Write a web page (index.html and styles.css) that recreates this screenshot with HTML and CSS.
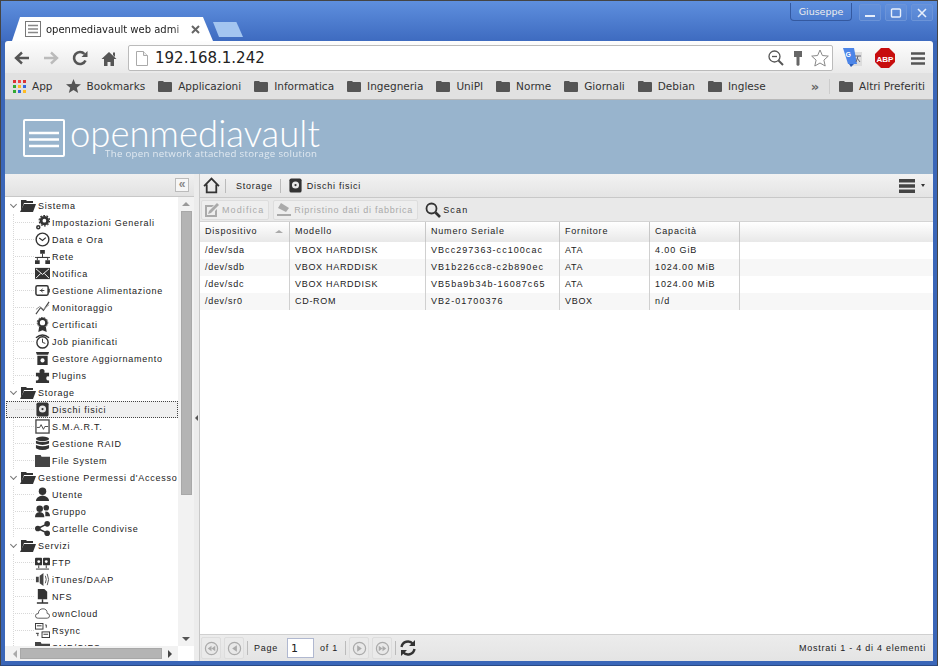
FILE: index.html
```html
<!DOCTYPE html>
<html lang="en">
<head>
<meta charset="UTF-8">
<title>openmediavault web administration</title>
<link rel="stylesheet" href="styles.css">
</head>
<body>

<!-- shared icons -->
<svg class="defs" width="0" height="0">
    <symbol id="i-folder" viewBox="0 0 14 12"><path d="M0 2q0-1 1-1h4l1 1h7q1 0 1 1v8q0 1-1 1H1q-1 0-1-1z" fill="#555"/></symbol>
    <symbol id="i-open" viewBox="0 0 16 13"><path d="M1 1h5l1 1h6v2H4L1 12z" fill="#333"/><path d="M4 5h12l-3 8H0z" fill="#333"/></symbol>
    <symbol id="i-gears" viewBox="0 0 16 16"><circle cx="10" cy="6" r="3.5" fill="none" stroke="#333" stroke-width="3"/><circle cx="10" cy="6" r="5.6" fill="none" stroke="#333" stroke-width="1.2" stroke-dasharray="2 1.5"/><circle cx="3.5" cy="13" r="1.6" fill="none" stroke="#333" stroke-width="1.6"/></symbol>
    <symbol id="i-clock" viewBox="0 0 16 16"><circle cx="8" cy="8" r="6.8" fill="none" stroke="#333" stroke-width="1.5"/><path d="M4.5 6.5 8 9l3.5-3" fill="none" stroke="#333" stroke-width="1.3"/></symbol>
    <symbol id="i-net" viewBox="0 0 16 16"><path d="M5.5 1h5v4h-5zM0 12h5v4H0zM11 12h5v4h-5z" fill="#333"/><path d="M8 5v4M2.5 12V9h11v3M0 9h16" stroke="#333" fill="none"/></symbol>
    <symbol id="i-mail" viewBox="0 0 16 14"><path d="M0 1h16v12H0z" fill="#333"/><path d="M1 2l7 6 7-6M1 12l5-5M15 12l-5-5" stroke="#fff" fill="none"/></symbol>
    <symbol id="i-power" viewBox="0 0 16 14"><rect x="1" y="2" width="13" height="10" rx="1.5" fill="none" stroke="#333" stroke-width="1.6"/><path d="M15 5v4" stroke="#333" stroke-width="1.6"/><path d="M5 7h5M8 5 6.500 7 8 9" stroke="#333" fill="none"/></symbol>
    <symbol id="i-chart" viewBox="0 0 16 16"><path d="M1 15 6 8l3 3 6-9" fill="none" stroke="#444" stroke-width="1.2"/><path d="M1 10l4-3 4 3 6-5" fill="none" stroke="#888"/></symbol>
    <symbol id="i-cert" viewBox="0 0 16 16"><circle cx="8" cy="6" r="4" fill="none" stroke="#333" stroke-width="2.4"/><circle cx="8" cy="6" r="5.6" fill="none" stroke="#333" stroke-dasharray="2 1"/><path d="M4.500 10 3.500 16 8 14l4.500 2-1-6z" fill="#333"/></symbol>
    <symbol id="i-job" viewBox="0 0 16 16"><circle cx="8" cy="9" r="6" fill="none" stroke="#333" stroke-width="1.5"/><path d="M1 4q7-6 14 0" fill="none" stroke="#333" stroke-width="1.5"/><path d="M8 5v4l3 1" fill="none" stroke="#333"/></symbol>
    <symbol id="i-update" viewBox="0 0 16 16"><path d="M1 1h14l-1 3H2zM2.500 5h11v10h-11z" fill="#333"/><circle cx="8" cy="10" r="2.200" fill="#fff"/></symbol>
    <symbol id="i-plugin" viewBox="0 0 16 16"><path d="M1 5h4q-1-4 2.500-4T10 5h5v4q-3-1-3 2t3 2v3H1v-3q3 1 3-2T1 9z" fill="#333"/></symbol>
    <symbol id="i-disk" viewBox="0 0 16 16"><rect x="1.500" y="0.500" width="13" height="15" rx="2" fill="#333"/><circle cx="8" cy="7.500" r="3.800" fill="#e8e8e8"/><circle cx="8" cy="7.500" r="1.200" fill="#333"/></symbol>
    <symbol id="i-smart" viewBox="0 0 16 16"><rect x="1" y="1" width="14" height="14" fill="#fff" stroke="#444" stroke-width="1.400"/><path d="M2 9h3l1.500-3L9 11l1.500-3H14" fill="none" stroke="#444"/></symbol>
    <symbol id="i-raid" viewBox="0 0 16 16"><ellipse cx="8" cy="3" rx="7" ry="2.500" fill="#333"/><path d="M1 5q7 3 14 0v3q-7 3-14 0zM1 9.500q7 3 14 0V13q-7 4-14 0z" fill="#333"/></symbol>
    <symbol id="i-fs" viewBox="0 0 16 16"><path d="M0 2h6l1 2h9v11H0z" fill="#444"/></symbol>
    <symbol id="i-user" viewBox="0 0 16 16"><circle cx="8" cy="4.500" r="4" fill="#333"/><path d="M1 15q0-5 7-6 7 1 7 6z" fill="#333"/></symbol>
    <symbol id="i-group" viewBox="0 0 16 16"><circle cx="5" cy="5" r="3.500" fill="#333"/><circle cx="12" cy="4" r="3" fill="#333"/><path d="M0 14q0-5 5-5.500 5 .5 5 5.500zM11 8q5 0 5 5h-5z" fill="#333"/></symbol>
    <symbol id="i-share" viewBox="0 0 16 16"><circle cx="3" cy="8" r="3" fill="#333"/><circle cx="13" cy="3" r="3" fill="#333"/><circle cx="13" cy="13" r="3" fill="#333"/><path d="M3 8l10-5M3 8l10 5" stroke="#333" stroke-width="1.500"/></symbol>
    <symbol id="i-ftp" viewBox="0 0 16 16"><rect x="0" y="3" width="7.500" height="8" rx="1" fill="#333"/><rect x="8.500" y="3" width="7.500" height="8" rx="1" fill="#333"/><circle cx="4" cy="7" r="1.500" fill="#fff"/><circle cx="12" cy="7" r="1.500" fill="#fff"/><path d="M4 11v3M12 11v3M1 15h14" stroke="#333"/></symbol>
    <symbol id="i-audio" viewBox="0 0 16 16"><path d="M1 5h3v6H1zM5 4l4-3v14l-4-3z" fill="#444"/><path d="M11 4q2 4 0 8M13 2q3 6 0 12" fill="none" stroke="#555"/></symbol>
    <symbol id="i-nfs" viewBox="0 0 16 16"><path d="M3 0h7l3 3v8H3z" fill="#333"/><path d="M8 11v3M2 15h12" stroke="#333" stroke-width="1.500"/></symbol>
    <symbol id="i-cloud" viewBox="0 0 16 12"><path d="M4 11H3Q.5 11 .5 8.500T3.500 6Q4 1 8.500 1T13 6q2.500 0 2.500 2.500T13 11z" fill="#fff" stroke="#555"/></symbol>
    <symbol id="i-rsync" viewBox="0 0 16 16"><rect x="0.500" y="0.500" width="8" height="6" fill="#fff" stroke="#333"/><rect x="7.500" y="9.500" width="8" height="6" fill="#fff" stroke="#333"/><path d="M2 3h5M9 12h5M11 2h1M12 2v3M1 11h3M3 11v3" stroke="#333"/></symbol>
    <symbol id="i-home" viewBox="0 0 16 16"><path d="M1 8.500 8 1.500l7 7M3.500 7v7.500h9V7" fill="none" stroke="#333" stroke-width="1.700"/></symbol>
    <symbol id="i-circle-left" viewBox="0 0 16 16"><circle cx="8" cy="8" r="6.500" fill="#e8e8e8" stroke="#aaa" stroke-width="1.300"/><path d="M10.500 4.500v7L5.500 8z" fill="#aaa"/></symbol>
    <symbol id="i-circle-first" viewBox="0 0 16 16"><circle cx="8" cy="8" r="6.500" fill="#e8e8e8" stroke="#aaa" stroke-width="1.300"/><path d="M8 5v6L4 8zM12 5v6L8 8z" fill="#aaa"/></symbol>
    <symbol id="i-circle-right" viewBox="0 0 16 16"><circle cx="8" cy="8" r="6.500" fill="#e8e8e8" stroke="#aaa" stroke-width="1.300"/><path d="M5.500 4.500v7l5-3.500z" fill="#aaa"/></symbol>
    <symbol id="i-circle-last" viewBox="0 0 16 16"><circle cx="8" cy="8" r="6.500" fill="#e8e8e8" stroke="#aaa" stroke-width="1.300"/><path d="M4 5v6l4-3zM8 5v6l4-3z" fill="#aaa"/></symbol>
</svg>

<div class="window">

    <div class="titlebar">
        <div class="tab">
            <svg class="tab-icon" width="16" height="16" viewBox="0 0 16 16"><rect x="0.500" y="0.500" width="15" height="15" fill="#fff" stroke="#777"/><path d="M3 4.500h10M3 8h10M3 11.500h10" stroke="#888" stroke-width="1.500"/></svg>
            <span class="tab-title">openmediavault web admi</span>
            <svg class="tab-close" width="9" height="9" viewBox="0 0 9 9"><path d="M1 1l7 7M8 1 1 8" stroke="#666" stroke-width="2"/></svg>
        </div>
        <div class="new-tab"></div>
        <div class="profile">Giuseppe</div>
        <div class="win-btn"><svg width="12" height="12" viewBox="0 0 12 12"><path d="M1 9h10" stroke="#e6eefb" stroke-width="2"/></svg></div>
        <div class="win-btn"><svg width="12" height="12" viewBox="0 0 12 12"><rect x="1.500" y="2" width="9" height="8" rx="1" fill="none" stroke="#e6eefb" stroke-width="1.400"/></svg></div>
        <div class="win-btn"><svg width="12" height="12" viewBox="0 0 12 12"><path d="M2 2l8 8M10 2l-8 8" stroke="#e6eefb" stroke-width="1.600"/></svg></div>
    </div>

    <div class="toolbar">
        <svg class="nav-icon" width="16" height="14" viewBox="0 0 16 14"><path d="M15 7H3M8 1.500 2 7l6 5.500" fill="none" stroke="#555" stroke-width="2.400"/></svg>
        <svg class="nav-icon" width="16" height="14" viewBox="0 0 16 14"><path d="M1 7h12M8 1.500 14 7l-6 5.500" fill="none" stroke="#bbb" stroke-width="2.400"/></svg>
        <svg class="nav-icon" width="16" height="16" viewBox="0 0 16 16"><path d="M13.500 10.500A6 6 0 1 1 12.500 4" fill="none" stroke="#555" stroke-width="2.600"/><path d="M15.500 1v6h-6z" fill="#555"/></svg>
        <svg class="nav-icon" width="16" height="15" viewBox="0 0 16 15"><path d="M8 1 .5 8H3v7h3.500v-4h3v4H13V8h2.500zM12 1.500h2V6l-2-2z" fill="#555"/></svg>
        <div class="omnibox">
            <svg class="page-icon" width="12" height="15" viewBox="0 0 12 15"><path d="M.5.500h7l4 4v10H.5z" fill="#fff" stroke="#aaa"/><path d="M7.500.500v4h4" fill="#eee" stroke="#aaa"/></svg>
            <span class="url">192.168.1.242</span>
            <svg class="omni-zoom" width="16" height="16" viewBox="0 0 16 16"><circle cx="6.500" cy="6.500" r="5.500" fill="#fff" stroke="#555" stroke-width="1.300"/><path d="M4 6.500h5" stroke="#555" stroke-width="1.300"/><path d="M10.500 10.500 15 15" stroke="#555" stroke-width="2"/></svg>
            <svg class="omni-key" width="10" height="15" viewBox="0 0 10 15"><path d="M1 0h8v6H6.500v8l-1.500 1-1.500-1V6H1z" fill="#666"/></svg>
            <svg class="omni-star" width="18" height="18" viewBox="0 0 18 18"><path d="M9 1l2.400 5.500 5.900.6-4.400 4 1.300 5.900L9 14l-5.200 3 1.300-5.900-4.400-4 5.900-.6z" fill="#fff" stroke="#888"/></svg>
        </div>
        <svg class="translate-icon" width="19" height="20" viewBox="0 0 19 20"><rect x="9" y="4" width="10" height="14" fill="#ddd"/><path d="M0 0h11l3 16H7l-1 0 -1 0z" fill="#4c85e8"/><path d="M6 16h5l-3 3z" fill="#2a5cb8"/><text class="translate-g" x="2.500" y="9">G</text><path d="M12 8h6M15 8l-2 6M14 10l3 4" stroke="#667" fill="none"/></svg>
        <svg class="abp-icon" width="20" height="20" viewBox="0 0 20 20"><path d="M6 0h8l6 6v8l-6 6H6l-6-6V6z" fill="#c70d0d"/><text class="abp-text" x="10" y="13.500">ABP</text></svg>
        <svg class="menu-icon" width="14" height="13" viewBox="0 0 14 13"><path d="M0 1.500h14M0 6.500h14M0 11.500h14" stroke="#555" stroke-width="2.600"/></svg>
    </div>

    <div class="bookmarks">
        <span class="bm bm-app"><svg width="13" height="13" viewBox="0 0 13 13"><path d="M0 0h3v3H0z" fill="#d33"/><path d="M5 0h3v3H5z" fill="#e44"/><path d="M10 0h3v3h-3z" fill="#d33"/><path d="M0 5h3v3H0z" fill="#3a3"/><path d="M5 5h3v3H5z" fill="#fb2"/><path d="M10 5h3v3h-3z" fill="#36d"/><path d="M0 10h3v3H0z" fill="#3a3"/><path d="M5 10h3v3H5z" fill="#36d"/><path d="M10 10h3v3h-3z" fill="#fb2"/></svg>App</span>
        <span class="bm bm-star"><svg width="15" height="14" viewBox="0 0 15 14"><path d="M7.500 0l2 5 5.500.3-4.200 3.400 1.400 5.300-4.700-3-4.700 3 1.400-5.300L0 5.300 5.500 5z" fill="#555"/></svg>Bookmarks</span>
        <span class="bm"><svg class="bm-folder"><use href="#i-folder"/></svg>Applicazioni</span>
        <span class="bm"><svg class="bm-folder"><use href="#i-folder"/></svg>Informatica</span>
        <span class="bm"><svg class="bm-folder"><use href="#i-folder"/></svg>Ingegneria</span>
        <span class="bm"><svg class="bm-folder"><use href="#i-folder"/></svg>UniPI</span>
        <span class="bm"><svg class="bm-folder"><use href="#i-folder"/></svg>Norme</span>
        <span class="bm"><svg class="bm-folder"><use href="#i-folder"/></svg>Giornali</span>
        <span class="bm"><svg class="bm-folder"><use href="#i-folder"/></svg>Debian</span>
        <span class="bm"><svg class="bm-folder"><use href="#i-folder"/></svg>Inglese</span>
        <span class="bm-more">»</span>
        <span class="bm bm-other"><svg class="bm-folder"><use href="#i-folder"/></svg>Altri Preferiti</span>
    </div>

    <div class="page">
        <div class="brand">
            <svg class="brand-icon" width="42" height="38" viewBox="0 0 42 38"><rect x="1" y="1" width="40" height="36" rx="1" fill="none" stroke="#fff" stroke-width="2"/><path d="M6 14h30M6 20.500h30M6 27h30" stroke="#fff" stroke-width="2.600"/></svg>
            <div class="brand-text">
                <div class="brand-name">openmediavault</div>
                <div class="brand-tag">The open network attached storage solution</div>
            </div>
        </div>

        <div class="panels">
            <div class="sidebar">
                <div class="panel-head">
                    <span class="collapse">«</span>
                </div>
                <div class="sidebar-body">
                    <div class="tree">
                        <div class="group-row"><span class="chev"></span><svg class="folder"><use href="#i-open"/></svg>Sistema</div>
                        <div class="group">
                            <div class="leaf"><svg class="ico"><use href="#i-gears"/></svg>Impostazioni Generali</div>
                            <div class="leaf"><svg class="ico"><use href="#i-clock"/></svg>Data e Ora</div>
                            <div class="leaf"><svg class="ico"><use href="#i-net"/></svg>Rete</div>
                            <div class="leaf"><svg class="ico"><use href="#i-mail"/></svg>Notifica</div>
                            <div class="leaf"><svg class="ico"><use href="#i-power"/></svg>Gestione Alimentazione</div>
                            <div class="leaf"><svg class="ico"><use href="#i-chart"/></svg>Monitoraggio</div>
                            <div class="leaf"><svg class="ico"><use href="#i-cert"/></svg>Certificati</div>
                            <div class="leaf"><svg class="ico"><use href="#i-job"/></svg>Job pianificati</div>
                            <div class="leaf"><svg class="ico"><use href="#i-update"/></svg>Gestore Aggiornamento</div>
                            <div class="leaf"><svg class="ico"><use href="#i-plugin"/></svg>Plugins</div>
                        </div>
                        <div class="group-row"><span class="chev"></span><svg class="folder"><use href="#i-open"/></svg>Storage</div>
                        <div class="group">
                            <div class="leaf selected"><svg class="ico"><use href="#i-disk"/></svg>Dischi fisici</div>
                            <div class="leaf"><svg class="ico"><use href="#i-smart"/></svg>S.M.A.R.T.</div>
                            <div class="leaf"><svg class="ico"><use href="#i-raid"/></svg>Gestione RAID</div>
                            <div class="leaf"><svg class="ico"><use href="#i-fs"/></svg>File System</div>
                        </div>
                        <div class="group-row"><span class="chev"></span><svg class="folder"><use href="#i-open"/></svg>Gestione Permessi d'Accesso</div>
                        <div class="group">
                            <div class="leaf"><svg class="ico"><use href="#i-user"/></svg>Utente</div>
                            <div class="leaf"><svg class="ico"><use href="#i-group"/></svg>Gruppo</div>
                            <div class="leaf"><svg class="ico"><use href="#i-share"/></svg>Cartelle Condivise</div>
                        </div>
                        <div class="group-row"><span class="chev"></span><svg class="folder"><use href="#i-open"/></svg>Servizi</div>
                        <div class="group">
                            <div class="leaf"><svg class="ico"><use href="#i-ftp"/></svg>FTP</div>
                            <div class="leaf"><svg class="ico"><use href="#i-audio"/></svg>iTunes/DAAP</div>
                            <div class="leaf"><svg class="ico"><use href="#i-nfs"/></svg>NFS</div>
                            <div class="leaf"><svg class="ico"><use href="#i-cloud"/></svg>ownCloud</div>
                            <div class="leaf"><svg class="ico"><use href="#i-rsync"/></svg>Rsync</div>
                            <div class="leaf"><svg class="ico"><use href="#i-fs"/></svg>SMB/CIFS</div>
                        </div>
                    </div>
                    <div class="vscroll">
                        <span class="arrow-up"></span>
                        <div class="vthumb"></div>
                        <span class="arrow-down"></span>
                    </div>
                </div>
                <div class="hscroll">
                    <span class="arrow-left"></span>
                    <div class="hthumb"></div>
                    <span class="arrow-right"></span>
                    <div class="hcorner"></div>
                </div>
            </div>

            <div class="splitter"><span class="split-handle"></span></div>

            <div class="main">
                <div class="crumbs">
                    <svg class="crumb-home"><use href="#i-home"/></svg>
                    <span class="sep"></span>
                    <span class="crumb">Storage</span>
                    <span class="sep"></span>
                    <svg class="ico crumb-disk"><use href="#i-disk"/></svg>
                    <span class="crumb">Dischi fisici</span>
                    <svg class="crumb-menu" width="16" height="14" viewBox="0 0 16 14"><path d="M0 0h16v3.500H0zM0 5.200h16v3.500H0zM0 10.500h16V14H0z" fill="#444"/></svg>
                    <span class="caret"></span>
                </div>
                <div class="actions">
                    <span class="action disabled action-edit"><svg class="action-icon" width="16" height="16" viewBox="0 0 16 16"><path d="M1 3h9L8 5H3v8h8V9l2-2v8H1z" fill="#aaa"/><path d="M5 9l8-8 2 2-8 8-3 1z" fill="#aaa"/></svg>Modifica</span>
                    <span class="action disabled"><svg class="action-icon" width="16" height="16" viewBox="0 0 16 16"><path d="M5 1l8 5-3 4-8-4z" fill="#aaa"/><path d="M1 12h14v2H1z" fill="#aaa"/></svg>Ripristino dati di fabbrica</span>
                    <span class="action action-scan"><svg class="action-icon" width="16" height="16" viewBox="0 0 16 16"><circle cx="6.500" cy="6.500" r="5" fill="none" stroke="#333" stroke-width="1.800"/><path d="M10.500 10.500 15 15" stroke="#333" stroke-width="2.600"/></svg>Scan</span>
                </div>

                <div class="grid">
                    <div class="grid-row grid-head">
                        <div class="cell c-dev">Dispositivo<span class="sort"></span></div>
                        <div class="cell c-model">Modello</div>
                        <div class="cell c-serial">Numero Seriale</div>
                        <div class="cell c-vendor">Fornitore</div>
                        <div class="cell c-size">Capacità</div>
                        <div class="cell c-rest"></div>
                    </div>
                    <div class="grid-row">
                        <div class="cell c-dev">/dev/sda</div>
                        <div class="cell c-model">VBOX HARDDISK</div>
                        <div class="cell c-serial">VBcc297363-cc100cac</div>
                        <div class="cell c-vendor">ATA</div>
                        <div class="cell c-size">4.00 GiB</div>
                    </div>
                    <div class="grid-row alt">
                        <div class="cell c-dev">/dev/sdb</div>
                        <div class="cell c-model">VBOX HARDDISK</div>
                        <div class="cell c-serial">VB1b226cc8-c2b890ec</div>
                        <div class="cell c-vendor">ATA</div>
                        <div class="cell c-size">1024.00 MiB</div>
                    </div>
                    <div class="grid-row">
                        <div class="cell c-dev">/dev/sdc</div>
                        <div class="cell c-model">VBOX HARDDISK</div>
                        <div class="cell c-serial">VB5ba9b34b-16087c65</div>
                        <div class="cell c-vendor">ATA</div>
                        <div class="cell c-size">1024.00 MiB</div>
                    </div>
                    <div class="grid-row alt">
                        <div class="cell c-dev">/dev/sr0</div>
                        <div class="cell c-model">CD-ROM</div>
                        <div class="cell c-serial">VB2-01700376</div>
                        <div class="cell c-vendor">VBOX</div>
                        <div class="cell c-size">n/d</div>
                    </div>
                </div>

                <div class="pager">
                    <span class="pg-btn"><svg class="pg-icon"><use href="#i-circle-first"/></svg></span>
                    <span class="pg-btn"><svg class="pg-icon"><use href="#i-circle-left"/></svg></span>
                    <span class="sep"></span>
                    <span class="pg-label">Page</span>
                    <input class="pg-input" type="text" value="1">
                    <span class="pg-label">of 1</span>
                    <span class="sep"></span>
                    <span class="pg-btn"><svg class="pg-icon"><use href="#i-circle-right"/></svg></span>
                    <span class="pg-btn"><svg class="pg-icon"><use href="#i-circle-last"/></svg></span>
                    <span class="sep"></span>
                    <svg class="pg-refresh" width="16" height="16" viewBox="0 0 16 16"><path d="M1.500 7A6.500 6.500 0 0 1 13 4M14.500 9A6.500 6.500 0 0 1 3 12" fill="none" stroke="#333" stroke-width="2.400"/><path d="M15 0v6H9zM1 16v-6h6z" fill="#333"/></svg>
                    <span class="pg-info">Mostrati 1 - 4 di 4 elementi</span>
                </div>
            </div>
        </div>
    </div>
</div>

</body>
</html>
```

FILE: styles.css
```css
/* browser window */
html, body {
    margin: 0;
    padding: 0;
    height: 100%;
    overflow: hidden;
    background: #3a66b8;
}
.defs {
    position: absolute;
}
.window {
    width: 938px;
    height: 666px;
    box-sizing: border-box;
    display: flex;
    flex-direction: column;
    border: 1px solid #444;
    border-bottom-color: #2a4a86;
    font-family: "DejaVu Sans", sans-serif;
}

/* title bar and tabs */
.titlebar {
    height: 40px;
    flex: none;
    display: flex;
    align-items: flex-start;
    padding: 0 4px;
    background: linear-gradient(#5e8fde, #3e6bc0);
}
.tab {
    width: 201px;
    height: 24px;
    margin: 16px 0 0 7px;
    box-sizing: border-box;
    display: flex;
    align-items: center;
    padding: 0 13px 0 13px;
    background: #fff;
    clip-path: polygon(0 100%, 4% 0, 95% 0, 100% 100%);
    font-size: 10px;
    color: #222;
}
.tab-icon {
    flex: none;
    margin-right: 5px;
}
.tab-title {
    flex: 1;
    white-space: nowrap;
    -webkit-mask-image: linear-gradient(to right, #000 88%, transparent 100%);
    mask-image: linear-gradient(to right, #000 88%, transparent 100%);
}
.tab-close {
    flex: none;
}
.new-tab {
    width: 30px;
    height: 15px;
    margin-top: 21px;
    background: #a3c5f0;
    clip-path: polygon(0 0, 78% 0, 100% 100%, 20% 100%);
}
.profile {
    margin: 2px 3px 0 auto;
    width: 60px;
    height: 17px;
    line-height: 17px;
    text-align: center;
    font-size: 9.5px;
    color: #eee;
    border: 1px solid #3459a0;
    border-top: none;
    border-radius: 0 0 4px 4px;
}
.win-btn {
    width: 20px;
    height: 15px;
    margin: 3px 0 0 4px;
    display: flex;
    align-items: center;
    justify-content: center;
    border: 1px solid #6c94d8;
    border-radius: 2px;
    background: rgba(255, 255, 255, 0.05);
}

/* address bar */
.toolbar {
    height: 32px;
    flex: none;
    box-sizing: border-box;
    margin: 0 4px;
    display: flex;
    align-items: center;
    padding: 2px 0 0 9px;
    background: linear-gradient(#fdfdfd, #e9e9e9);
    border-radius: 3px 3px 0 0;
}
.nav-icon {
    flex: none;
    margin-right: 13px;
}
.omnibox {
    width: 705px;
    height: 26px;
    box-sizing: border-box;
    margin-left: -2px;
    display: flex;
    align-items: center;
    padding: 0 3px 0 7px;
    background: #fff;
    border: 1px solid #bbb;
    border-radius: 2px;
}
.page-icon {
    margin-right: 7px;
}
.url {
    font-size: 15px;
    color: #222;
    flex: 1;
}
.omni-zoom {
    margin-right: 9px;
}
.omni-key {
    margin-right: 8px;
}
.translate-icon {
    margin-left: 10px;
}
.translate-g {
    font: bold 7px "Liberation Sans", sans-serif;
    fill: #fff;
}
.abp-icon {
    margin-left: 13px;
}
.abp-text {
    font: bold 8px "Liberation Sans", sans-serif;
    fill: #fff;
    text-anchor: middle;
}
.menu-icon {
    margin-left: 16px;
}

/* bookmarks */
.bookmarks {
    height: 27px;
    flex: none;
    margin: 0 4px;
    box-sizing: border-box;
    display: flex;
    align-items: center;
    padding: 0 0 0 8px;
    background: #e1e1e1;
    border-bottom: 1px solid #b8b8b8;
    font-size: 10.5px;
    color: #333;
}
.bm {
    display: flex;
    align-items: center;
    gap: 6px;
    margin-right: 13px;
    white-space: nowrap;
}
.bm-folder {
    width: 14px;
    height: 12px;
}
.bm-more {
    margin-left: auto;
    padding: 0 10px 0 4px;
    font-weight: bold;
    font-size: 13px;
    color: #666;
    border-right: 1px solid #ccc;
}
.bm-other {
    margin: 0 8px 0 9px;
}

/* page */
.page {
    flex: 1;
    min-height: 0;
    margin: 0 4px 4px;
    display: flex;
    flex-direction: column;
    background: #98b4cd;
    font-family: "Liberation Sans", sans-serif;
    font-size: 9px;
    letter-spacing: 0.75px;
    color: #222;
}
.brand {
    height: 74px;
    flex: none;
    display: flex;
    align-items: flex-start;
    padding: 18px 0 0 18px;
    box-sizing: border-box;
}
.brand-icon {
    margin-top: 1px;
}
.brand-text {
    margin-left: 5px;
    color: #fff;
}
.brand-name {
    font-family: Lato, sans-serif;
    font-weight: 300;
    font-size: 36.5px;
    line-height: 30px;
    letter-spacing: 0;
}
.brand-tag {
    font-family: "Open Sans", sans-serif;
    font-size: 9.7px;
    letter-spacing: 0.3px;
    line-height: 11px;
    margin-left: 35px;
    opacity: 0.7;
    white-space: nowrap;
}
.panels {
    flex: 1;
    min-height: 0;
    display: flex;
}

/* left tree panel */
.sidebar {
    width: 189px;
    flex: none;
    display: flex;
    flex-direction: column;
    background: #fff;
}
.panel-head {
    height: 23px;
    flex: none;
    box-sizing: border-box;
    display: flex;
    align-items: center;
    justify-content: flex-end;
    padding-right: 5px;
    background: linear-gradient(#f0f0f0, #e2e2e2);
    border-bottom: 1px solid #c8c8c8;
}
.collapse {
    width: 12px;
    height: 12px;
    line-height: 10px;
    text-align: center;
    font-size: 12px;
    font-weight: bold;
    letter-spacing: 0;
    color: #888;
    background: #f6f6f6;
    border: 1px solid #bbb;
}
.sidebar-body {
    flex: 1;
    min-height: 0;
    display: flex;
}
.tree {
    flex: 1;
    min-width: 0;
    overflow: hidden;
}
.group-row,
.leaf {
    height: 17px;
    display: flex;
    align-items: center;
    white-space: nowrap;
    box-sizing: border-box;
}
.chev {
    width: 5px;
    height: 5px;
    flex: none;
    margin: -3px 4px 0 6px;
    box-sizing: border-box;
    border: solid #777;
    border-width: 0 1px 1px 0;
    transform: rotate(45deg);
}
.folder {
    width: 16px;
    height: 13px;
    flex: none;
    margin: 0 2px 0 0;
}
.group {
    margin-left: 8px;
    border-left: 1px dotted #d8d8d8;
}
.leaf {
    padding-left: 21px;
    position: relative;
}
.leaf::before {
    content: "";
    position: absolute;
    left: 1px;
    top: 8px;
    width: 19px;
    border-top: 1px dotted #d8d8d8;
}
.ico {
    width: 15px;
    height: 15px;
    margin-right: 2px;
    flex: none;
    position: relative;
}
.selected {
    background: #f0f0f0;
    outline: 1px dotted #444;
    outline-offset: -1px;
    margin-left: -8px;
    padding-left: 29px;
}
.selected::before {
    left: 9px;
}
.vscroll {
    width: 16px;
    flex: none;
    display: flex;
    flex-direction: column;
    align-items: center;
    background: #f2f2f2;
}
.arrow-up,
.arrow-down {
    width: 0;
    height: 0;
    margin: 5px 0;
    border: 4px solid transparent;
    border-top: none;
    border-bottom: 4px solid #999;
}
.arrow-down {
    margin-top: auto;
    border-bottom: none;
    border-top: 4px solid #555;
}
.vthumb {
    width: 11px;
    height: 284px;
    background: #b4b4b4;
    border: 1px solid #a8a8a8;
    box-sizing: border-box;
}
.hscroll {
    height: 15px;
    flex: none;
    display: flex;
    align-items: center;
    background: #f2f2f2;
}
.arrow-left,
.arrow-right {
    width: 0;
    height: 0;
    margin: 0 3px 0 8px;
    border: 4px solid transparent;
    border-left: none;
    border-right: 4px solid #aaa;
}
.arrow-right {
    margin: 0 6px 0 6px;
    border-right: none;
    border-left: 4px solid #444;
}
.hthumb {
    width: 142px;
    height: 11px;
    background: #b4b4b4;
    border: 1px solid #a8a8a8;
    box-sizing: border-box;
}
.hcorner {
    flex: 1;
    height: 100%;
    background: #fff;
}
.splitter {
    width: 5px;
    flex: none;
    display: flex;
    align-items: center;
    justify-content: center;
    background: #ececec;
}
.split-handle {
    width: 0;
    height: 0;
    border: 3px solid transparent;
    border-left: none;
    border-right: 3px solid #555;
}

/* right panel */
.main {
    flex: 1;
    min-width: 0;
    display: flex;
    flex-direction: column;
    background: #fff;
    border-left: 1px solid #c8c8c8;
}
.crumbs {
    height: 24px;
    flex: none;
    box-sizing: border-box;
    display: flex;
    align-items: center;
    padding: 0 8px 0 3px;
    background: linear-gradient(#f2f2f2, #e4e4e4);
    border-bottom: 1px solid #c8c8c8;
}
.crumb-home {
    width: 17px;
    height: 17px;
}
.sep {
    width: 1px;
    height: 14px;
    margin: 0 10px 0 5px;
    background: #bbb;
    flex: none;
}
.crumb + .sep {
    margin: 0 7px;
}
.crumb-disk {
    margin-right: 4px;
}
.crumb-menu {
    margin-left: auto;
}
.caret {
    width: 0;
    height: 0;
    margin-left: 6px;
    border: 2.500px solid transparent;
    border-top: 3px solid #333;
    border-bottom: none;
}
.actions {
    height: 24px;
    flex: none;
    box-sizing: border-box;
    display: flex;
    align-items: center;
    gap: 4px;
    padding: 0 2px 0 1px;
    background: #e9e9e9;
    border-bottom: 1px solid #d4d4d4;
}
.action {
    height: 20px;
    display: flex;
    align-items: center;
    gap: 2px;
    padding: 0 4px 0 2px;
    box-sizing: border-box;
    border: 1px solid transparent;
}
.action-edit {
    letter-spacing: 1.1px;
}
.action-scan {
    letter-spacing: 1.2px;
}
.disabled {
    color: #aaa;
    background: #eee;
    border-color: #ddd;
    border-radius: 2px;
}
.grid {
    flex: 1;
    min-height: 0;
}
.grid-row {
    height: 17px;
    display: flex;
}
.grid-head {
    height: 20px;
    background: linear-gradient(#fff, #e8e8e8);
}
.alt {
    background: #f7f7f7;
}
.cell {
    box-sizing: border-box;
    flex: none;
    padding: 0 4px 0 5px;
    line-height: 17px;
    border-right: 1px solid #d0d0d0;
    white-space: nowrap;
    letter-spacing: 0.7px;
}
.grid-head .cell {
    line-height: 19px;
    position: relative;
    border-right-color: #c8c8c8;
    letter-spacing: 0.8px;
}
.c-dev { width: 90px; }
.c-model { width: 136px; }
.c-serial { width: 134px; letter-spacing: 1.05px; }
.c-vendor { width: 90px; }
.c-size { width: 90px; letter-spacing: 0.9px; }
.c-rest { flex: 1; border-right: none; }
.sort {
    position: absolute;
    right: 6px;
    top: 8px;
    width: 0;
    height: 0;
    border: 4px solid transparent;
    border-top: none;
    border-bottom: 3px solid #aaa;
}
.pager {
    height: 27px;
    flex: none;
    box-sizing: border-box;
    display: flex;
    align-items: center;
    padding: 0 7px 0 1px;
    background: linear-gradient(#ececec, #e4e4e4);
    border-top: 1px solid #d0d0d0;
}
.pager .sep {
    margin: 0 6px 0 0;
}
.pager .pg-label + .sep {
    margin: 0 3px 0 7px;
}
.pg-btn {
    width: 18px;
    height: 20px;
    margin-right: 3px;
    display: flex;
    align-items: center;
    justify-content: center;
    background: #eaeaea;
    border: 1px solid #ddd;
    border-radius: 2px;
}
.pg-icon {
    width: 15px;
    height: 15px;
}
.pg-label {
    flex: none;
}
.pg-input {
    width: 27px;
    height: 20px;
    box-sizing: border-box;
    margin: 0 6px 0 9px;
    padding: 0 3px;
    border: 1px solid #b0b8d0;
    font: 11px "DejaVu Sans", sans-serif;
    color: #222;
}
.pg-refresh {
    margin-left: -2px;
}
.pg-info {
    margin-left: auto;
}
```
